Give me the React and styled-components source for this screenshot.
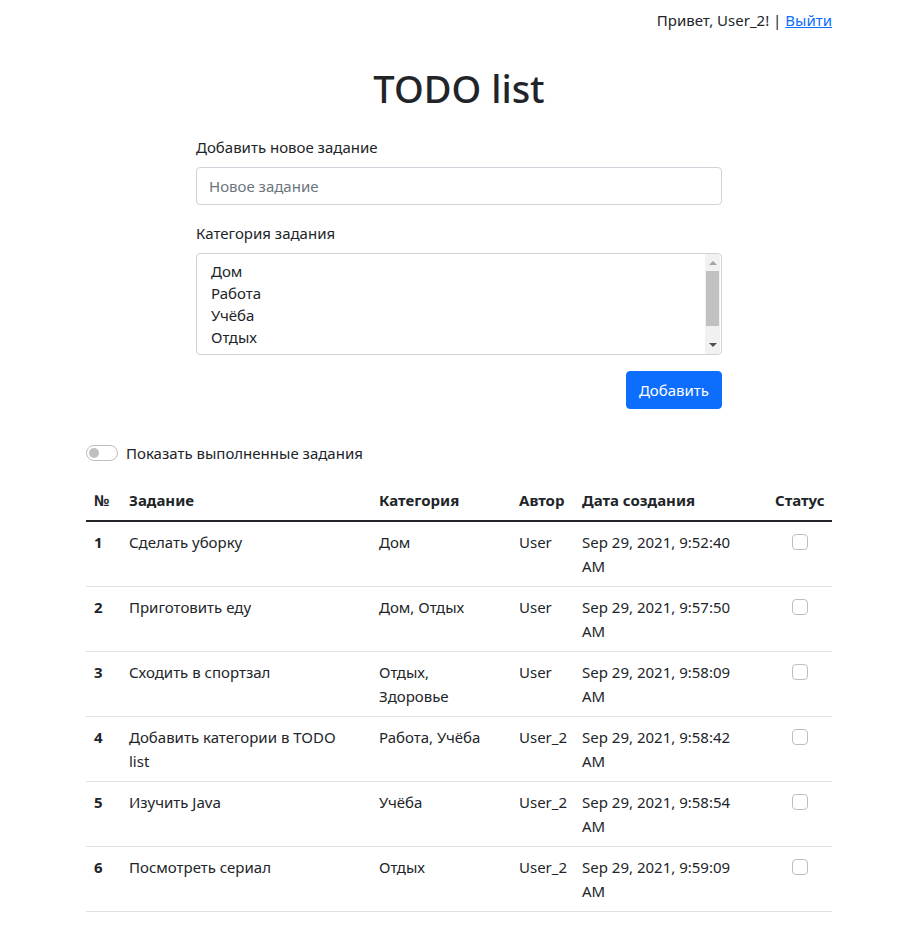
// TODO list page
import styled, { createGlobalStyle } from "styled-components";

const GlobalStyle = createGlobalStyle`
    body {
        margin: 0;
        font-family: "Noto Sans", "Open Sans", sans-serif;
        font-size: 15px;
        line-height: 24px;
        color: #212529;
        background: #fff;
    }
`;

const tasks = [
    { id: 1, title: "Сделать уборку", category: "Дом", author: "User", date: "Sep 29, 2021, 9:52:40 AM" },
    { id: 2, title: "Приготовить еду", category: "Дом, Отдых", author: "User", date: "Sep 29, 2021, 9:57:50 AM" },
    { id: 3, title: "Сходить в спортзал", category: "Отдых, Здоровье", author: "User", date: "Sep 29, 2021, 9:58:09 AM" },
    { id: 4, title: "Добавить категории в TODO list", category: "Работа, Учёба", author: "User_2", date: "Sep 29, 2021, 9:58:42 AM" },
    { id: 5, title: "Изучить Java", category: "Учёба", author: "User_2", date: "Sep 29, 2021, 9:58:54 AM" },
    { id: 6, title: "Посмотреть сериал", category: "Отдых", author: "User_2", date: "Sep 29, 2021, 9:59:09 AM" },
];

// 목록에 보이는 카테고리
const categories = ["Дом", "Работа", "Учёба", "Отдых"];

// 상단 인사말
const TopBar = styled.div`
    display: flex;
    justify-content: flex-end;
    padding: 8px 88px 0 0;
`;

const Link = styled.a`
    color: #0d6efd;
    text-decoration: underline;
    cursor: pointer;
`;

const Container = styled.div`
    width: 746px;
    margin-left: 86px;
    padding-bottom: 30px;
`;

const Title = styled.h1`
    margin: 32px 0 0;
    text-align: center;
    font-size: 38px;
    font-weight: 500;
    line-height: 48px;
`;

const Form = styled.form`
    width: 526px;
    margin: 23px auto 0;
    display: flex;
    flex-direction: column;
`;

const Label = styled.label`
    display: block;
    margin-bottom: 8px;
`;

const Input = styled.input`
    box-sizing: border-box;
    width: 100%;
    height: 38px;
    padding: 6px 12px;
    margin-bottom: 16px;
    font: inherit;
    color: #212529;
    border: 1px solid #ced4da;
    border-radius: 4px;
    outline: none;

    &::placeholder {
        color: #6c757d;
    }
`;

// 카테고리 목록 (multiple select 모양)
const ListBox = styled.div`
    box-sizing: border-box;
    display: flex;
    height: 102px;
    border: 1px solid #ced4da;
    border-radius: 4px;
    overflow: hidden;
    margin-bottom: 16px;
`;

const Options = styled.div`
    flex: 1;
    padding: 6px 12px;
`;

const Option = styled.div`
    padding: 0 2px;
    line-height: 22px;
`;

const ScrollBar = styled.div`
    width: 15px;
    margin-right: 1px;
    background: #f1f1f1;
    display: flex;
    flex-direction: column;
    align-items: center;
`;

const Arrow = styled.div`
    width: 0;
    height: 0;
    margin: ${(p) => (p.$down ? "auto 0 7px" : "7px 0 0")};
    border-left: 4px solid transparent;
    border-right: 4px solid transparent;
    ${(p) =>
        p.$down
            ? "border-top: 4px solid #505050;"
            : "border-bottom: 4px solid #a3a3a3;"}
`;

const Thumb = styled.div`
    width: 13px;
    height: 55px;
    margin-top: 6px;
    background: #c1c1c1;
`;

const ButtonRow = styled.div`
    display: flex;
    justify-content: flex-end;
`;

const Button = styled.button`
    height: 38px;
    padding: 0 12px;
    font: inherit;
    color: #fff;
    background: #0d6efd;
    border: 1px solid #0d6efd;
    border-radius: 4px;
    cursor: pointer;
`;

// 완료된 작업 표시 스위치
const SwitchRow = styled.label`
    display: flex;
    align-items: center;
    gap: 8px;
    margin: 32px 0 15px;
`;

const Switch = styled.span`
    box-sizing: border-box;
    width: 32px;
    height: 16px;
    border: 1px solid #bfbfbf;
    border-radius: 16px;
    display: flex;
    align-items: center;
    padding-left: 2px;

    &::before {
        content: "";
        width: 10px;
        height: 10px;
        border-radius: 50%;
        background: #bfbfbf;
    }
`;

const Table = styled.table`
    width: 100%;
    border-collapse: collapse;
    table-layout: fixed;
`;

const Th = styled.th`
    padding: 8px;
    text-align: ${(p) => p.$align || "left"};
    vertical-align: top;
    font-weight: 700;
    border-bottom: ${(p) => (p.$head ? "2px solid #212529" : "1px solid #dee2e6")};
`;

const Td = styled.td`
    padding: 8px;
    text-align: ${(p) => p.$align || "left"};
    vertical-align: top;
    border-bottom: 1px solid #dee2e6;
`;

// 셀 안의 글자 줄바꿈 폭
const CellText = styled.div`
    max-width: ${(p) => p.$max}px;
`;

const Check = styled.span`
    display: inline-block;
    box-sizing: border-box;
    width: 16px;
    height: 16px;
    margin-top: 4px;
    border: 1px solid #bfbfbf;
    border-radius: 4px;
`;

const App = () => {
    return (
        <>
            <GlobalStyle />
            <TopBar>
                <span>
                    Привет, User_2! | <Link>Выйти</Link>
                </span>
            </TopBar>

            <Container>
                <Title>TODO list</Title>

                <Form>
                    <Label>Добавить новое задание</Label>
                    <Input placeholder="Новое задание" />

                    <Label>Категория задания</Label>
                    <ListBox>
                        <Options>
                            {categories.map((c) => (
                                <Option key={c}>{c}</Option>
                            ))}
                        </Options>
                        <ScrollBar>
                            <Arrow />
                            <Thumb />
                            <Arrow $down />
                        </ScrollBar>
                    </ListBox>

                    <ButtonRow>
                        <Button type="button">Добавить</Button>
                    </ButtonRow>
                </Form>

                <SwitchRow>
                    <Switch />
                    Показать выполненные задания
                </SwitchRow>

                <Table>
                    <colgroup>
                        <col style={{ width: 35 }} />
                        <col style={{ width: 250 }} />
                        <col style={{ width: 140 }} />
                        <col style={{ width: 63 }} />
                        <col style={{ width: 193 }} />
                        <col style={{ width: 65 }} />
                    </colgroup>
                    <thead>
                        <tr>
                            <Th $head>№</Th>
                            <Th $head>Задание</Th>
                            <Th $head>Категория</Th>
                            <Th $head>Автор</Th>
                            <Th $head>Дата создания</Th>
                            <Th $head $align="center">Статус</Th>
                        </tr>
                    </thead>
                    <tbody>
                        {tasks.map((t) => (
                            <tr key={t.id}>
                                <Th>{t.id}</Th>
                                <Td>
                                    <CellText $max={215}>{t.title}</CellText>
                                </Td>
                                <Td>
                                    <CellText $max={112}>{t.category}</CellText>
                                </Td>
                                <Td>{t.author}</Td>
                                <Td>
                                    <CellText $max={160}>{t.date}</CellText>
                                </Td>
                                <Td $align="center">
                                    <Check />
                                </Td>
                            </tr>
                        ))}
                    </tbody>
                </Table>
            </Container>
        </>
    );
};

export default App;
